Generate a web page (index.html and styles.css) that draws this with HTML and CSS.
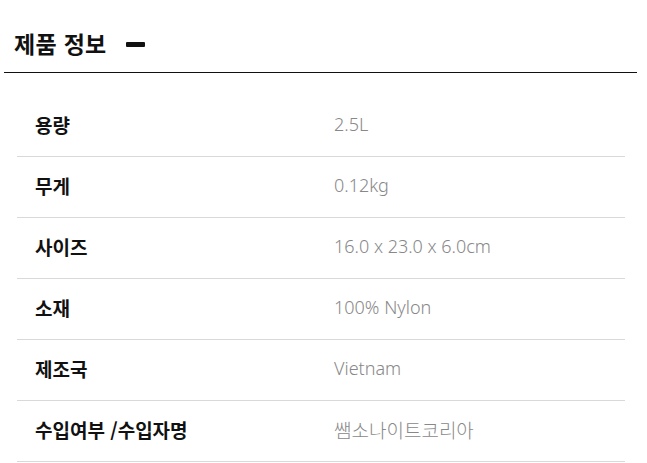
FILE: index.html
```html
<!DOCTYPE html>
<html lang="ko">
<head>
<meta charset="utf-8">
<link rel="stylesheet" href="styles.css">
</head>
<body>
<section class="info">
  <div class="info-head">
    <h2 class="info-title">제품 정보</h2>
    <span class="toggle"></span>
  </div>
  <div class="spec">
    <div class="row"><div class="label">용량</div><div class="value">2.5L</div></div>
    <div class="row"><div class="label">무게</div><div class="value">0.12kg</div></div>
    <div class="row"><div class="label">사이즈</div><div class="value">16.0 x 23.0 x 6.0cm</div></div>
    <div class="row"><div class="label">소재</div><div class="value">100% Nylon</div></div>
    <div class="row"><div class="label">제조국</div><div class="value">Vietnam</div></div>
    <div class="row"><div class="label">수입여부 /수입자명</div><div class="value value-ko">쌤소나이트코리아</div></div>
  </div>
</section>
</body>
</html>
```
FILE: styles.css
```css
* { box-sizing: border-box; }
html, body { margin: 0; padding: 0; background: #fff; }
body {
  font-family: "Noto Sans CJK KR", "Noto Sans", sans-serif;
  color: #111;
}
.info { padding: 0 10px 0 4px; }
.info-head {
  display: flex;
  align-items: center;
  height: 73px;
  padding: 14px 0 0 10px;
  border-bottom: 1px solid #111;
}
.info-title {
  margin: 0;
  font-size: 23px;
  font-weight: 700;
  line-height: 1;
  letter-spacing: 0.3px;
}
.toggle {
  display: block;
  width: 19px;
  height: 5px;
  background: #111;
  margin: 3px 0 0 19px;
  border-radius: 1px;
}
.spec {
  margin: 23px 12px 0 13px;
}
.row {
  display: flex;
  align-items: center;
  height: 61px;
  padding-bottom: 4px;
  border-bottom: 1px solid #d9d9d9;
}
.label {
  width: 317px;
  padding-left: 18px;
  font-size: 19px;
  font-weight: 700;
  color: #111;
}
.value {
  font-family: "Noto Sans", "Noto Sans CJK KR", sans-serif;
  font-size: 18px;
  font-weight: 300;
  color: #888;
}
.value-ko {
  font-family: "Noto Sans CJK KR", sans-serif;
  font-size: 19px;
}
```
